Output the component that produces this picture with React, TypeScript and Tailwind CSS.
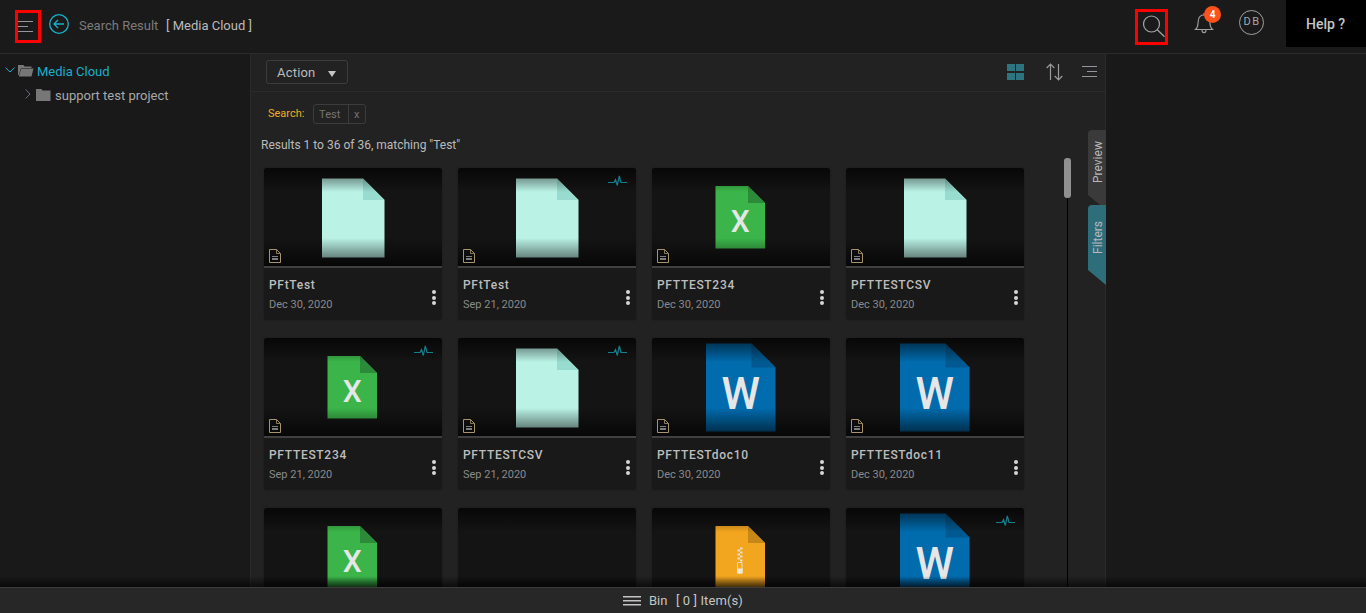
import React from 'react';

type Kind = 'page' | 'excel' | 'word' | 'zip' | 'empty';
type Asset = { kind: Kind; name: string; date: string; pulse?: boolean };

const assets: Asset[] = [
  { kind: 'page', name: 'PFtTest', date: 'Dec 30, 2020' },
  { kind: 'page', name: 'PFtTest', date: 'Sep 21, 2020', pulse: true },
  { kind: 'excel', name: 'PFTTEST234', date: 'Dec 30, 2020' },
  { kind: 'page', name: 'PFTTESTCSV', date: 'Dec 30, 2020' },
  { kind: 'excel', name: 'PFTTEST234', date: 'Sep 21, 2020', pulse: true },
  { kind: 'page', name: 'PFTTESTCSV', date: 'Sep 21, 2020', pulse: true },
  { kind: 'word', name: 'PFTTESTdoc10', date: 'Dec 30, 2020' },
  { kind: 'word', name: 'PFTTESTdoc11', date: 'Dec 30, 2020' },
  { kind: 'excel', name: '', date: '' },
  { kind: 'empty', name: '', date: '' },
  { kind: 'zip', name: '', date: '' },
  { kind: 'word', name: '', date: '', pulse: true },
];

function FileArt({ kind }: { kind: Kind }) {
  return (
    <svg width="178" height="98" viewBox="0 0 178 98" className="block">
      {kind === 'page' && (
        <>
          <path d="M58 10.5H99L120.5 32V89.5H58Z" fill="#baf2e6" />
          <path d="M99 10.5L120.5 32H99Z" fill="#98dccf" />
        </>
      )}
      {kind === 'excel' && (
        <>
          <path d="M63.5 18H96L113 35V80.5H63.5Z" fill="#3bb54a" />
          <path d="M96 18L113 35H96Z" fill="#2c8b38" />
          <text x="88.2" y="64.3" fontSize="32" fontWeight="500" textAnchor="middle" textLength="19" lengthAdjust="spacingAndGlyphs" fill="#e6e6e6">X</text>
        </>
      )}
      {kind === 'word' && (
        <>
          <path d="M54 5.5H99.5L123.5 29.5V93.5H54Z" fill="#006bad" />
          <path d="M99.5 5.5L123.5 29.5H99.5Z" fill="#005a91" />
          <text x="88.7" y="71" fontSize="45" fontWeight="500" textAnchor="middle" textLength="38.5" lengthAdjust="spacingAndGlyphs" fill="#e6e6e6">W</text>
        </>
      )}
      {kind === 'zip' && (
        <>
          <path d="M63.5 18H96L113 35V80.5H63.5Z" fill="#f2a51f" />
          <path d="M96 18L113 35H96Z" fill="#c58718" />
          <path d="M88 39.500h2.500v2h-2.500zM85.500 41.500h2.500v2h-2.500zM88 43.500h2.500v2h-2.500zM85.500 45.500h2.500v2h-2.500zM88 47.500h2.500v2h-2.500zM85.500 49.500h2.500v2h-2.500zM88 51.500h2.500v2h-2.500z" fill="#e8dfc8" />
          <path d="M85.500 54.500h4.500v10.500h-4.500z" fill="none" stroke="#e8dfc8" />
          <path d="M85 60.500h5.500v5h-5.500z" fill="#eee8da" />
        </>
      )}
    </svg>
  );
}

function Card({ asset }: { asset: Asset }) {
  return (
    <div className="w-[178px] h-[152px] rounded-[3px] overflow-hidden bg-[#191919] shadow-[0_0_2px_#1a1a1a]">
      <div className="relative h-[100px] bg-[#141414] border-b-2 border-[#404040]">
        <FileArt kind={asset.kind} />
        <div className="absolute inset-x-0 top-0 h-6 bg-linear-to-b from-black/65 to-transparent" />
        <div className="absolute inset-x-0 bottom-0 h-7 bg-linear-to-t from-black/65 to-transparent" />
        {asset.pulse && (
          <svg className="absolute left-[150px] top-[6px]" width="20" height="14" viewBox="0 0 20 14" fill="none" stroke="#14808f" strokeWidth="1.2">
            <path d="M0 8.500H6L7.500 5.500L9.300 11.500L11.300 1.800L13 8.500H19" />
          </svg>
        )}
        {asset.name && (
          <svg className="absolute left-[5px] top-[81px]" width="13" height="15" viewBox="0 0 13 15" fill="none" stroke="#a8946c">
            <path d="M.5 .5H7.500L11.500 4.500V13.500H.5Z" />
            <path d="M7.500 .5V4.500H11.500" strokeWidth=".8" />
            <path d="M3 7.500H9M3 9.500H9M3 10.500H9" stroke="#8b8b8b" strokeWidth=".9" />
          </svg>
        )}
      </div>
      <div className="flex h-[52px]">
        <div className="flex-1 pl-[5px] pt-[9px]">
          <div className="text-[12px] leading-4 font-medium tracking-[0.7px] text-[#bdbdbd]">{asset.name}</div>
          <div className="mt-1 text-[11px] leading-4 text-[#8a8a8a]">{asset.date}</div>
        </div>
        <div className="flex flex-col gap-[1.5px] pr-[6px] pt-[22px]">
          <span className="size-1 rounded-full bg-[#d6d6d6]" />
          <span className="size-1 rounded-full bg-[#d6d6d6]" />
          <span className="size-1 rounded-full bg-[#d6d6d6]" />
        </div>
      </div>
    </div>
  );
}

function Header() {
  return (
    <header className="flex h-[54px] shrink-0 items-start border-b border-[#2b2b2b] bg-[#1a1a1a]">
      <div className="ml-[15px] mt-[10px] h-[33px] w-[26px] border-3 border-[#f00]">
        <svg width="20" height="27" viewBox="0 0 20 27" stroke="#96969e" className="block">
          <path d="M0 8.500H15M0 13.500H10M0 18.500H15" />
        </svg>
      </div>
      <svg className="ml-2 mt-[14px]" width="20" height="20" viewBox="0 0 20 20" fill="none" stroke="#17b2cd" strokeWidth="1.300">
        <circle cx="10" cy="10" r="9.300" />
        <path d="M15 10H5M9 6L5 10L9 14" />
      </svg>
      <div className="ml-[10px] mt-[17px] flex text-[13px] leading-[18px]">
        <span className="w-[87px] text-[#7b7b7b]">Search Result</span>
        <span className="text-[#bababa]">[ Media Cloud ]</span>
      </div>
      <div className="ml-auto mt-[9px] h-9 w-[33px] border-3 border-[#f00]">
        <svg width="27" height="30" viewBox="0 0 27 30" fill="none" stroke="#a5a5a5" strokeWidth="1.200" className="block">
          <circle cx="13.500" cy="12" r="8" />
          <path d="M19.300 17.700L26.500 24.800" />
        </svg>
      </div>
      <div className="relative ml-[26px] mt-[12px] h-6 w-[20px]">
        <svg width="20" height="22" viewBox="0 0 20 22" fill="none" stroke="#a0a0a0" strokeWidth="1.100">
          <path d="M1.500 17.500C4.500 15 3.800 12 4.300 8.500C4.800 5 6.800 3 10 3S15.200 5 15.700 8.500C16.200 12 15.500 15 18.500 17.500Z" />
          <path d="M8 18C8 21.500 12 21.500 12 18M10 1V3" />
        </svg>
        <span className="absolute left-[10px] top-[-6px] flex size-[17px] items-center justify-center rounded-full bg-[#ff511c] text-[10px] font-bold text-white">4</span>
      </div>
      <div className="ml-[25px] mt-[10px] flex size-[25px] items-center justify-center rounded-full border border-[#a0a0a0] text-[11px] tracking-[1.500px] text-[#a8a8a8]"><span className="-mr-[1px]">DB</span></div>
      <div className="ml-[22px] h-[47px] w-[80px] bg-black pl-5 text-[14px] leading-[48px] font-medium text-[#c6c6c6]">Help ?</div>
    </header>
  );
}

function Sidebar() {
  return (
    <aside className="w-[251px] shrink-0 border-r border-[#292929] bg-[#191919] text-[13px]">
      <div className="mt-[6px] flex h-6 items-center pl-[5px] text-[#1cadc9]">
        <svg width="10" height="6" viewBox="0 0 10 6" fill="none" stroke="#1cadc9" className="-mt-[4px]"><path d="M.5 .7L5 5L9.500 .7" /></svg>
        <svg className="ml-[3px] -mt-[2px]" width="16" height="12" viewBox="0 0 16 12" fill="#777">
          <path d="M0 0H5.500L6.500 1.500H13.500V3H3L.8 10H0Z" />
          <path d="M3.300 3.500H15.500L13.500 11.500H.8Z" />
        </svg>
        <span className="ml-[3px]">Media Cloud</span>
      </div>
      <div className="flex h-6 items-center pl-[25px] text-[#a8a8a8]">
        <svg width="6" height="10" viewBox="0 0 6 10" fill="none" stroke="#66717b" className="-mt-1"><path d="M.7 .5L5 5L.7 9.500" /></svg>
        <svg className="ml-[5px] -mt-[3px]" width="15" height="12" viewBox="0 0 15 12" fill="#777"><path d="M0 0H5.500L6.500 1.500H14.500V12H0Z" /></svg>
        <span className="ml-1">support test project</span>
      </div>
    </aside>
  );
}

function SideTabs() {
  return (
    <div className="absolute left-[837px] top-[76px] w-[18px] text-[12px] text-[#b9b9b9]">
      <svg width="18" height="155" viewBox="0 0 18 155" className="block">
        <path d="M4 0H18V75H12L0 65V4Q0 0 4 0Z" fill="#3a3a3a" />
        <path d="M4 75H18V155L0 140V79Q0 75 4 75Z" fill="#2e6e7b" />
      </svg>
      <span className="absolute left-px top-[-1px] flex h-[66px] w-[18px] rotate-180 items-center justify-center [writing-mode:vertical-rl]">Preview</span>
      <span className="absolute left-px top-[74px] flex h-[66px] w-[18px] rotate-180 items-center justify-center [writing-mode:vertical-rl]">Filters</span>
    </div>
  );
}

export default function App() {
  return (
    <div className="flex h-[613px] w-[1366px] flex-col overflow-hidden bg-[#191919] font-[Roboto,sans-serif]">
      <Header />
      <div className="relative flex h-[533px] shrink-0 overflow-hidden">
        <Sidebar />
        <main className="relative flex w-[855px] flex-col border-r border-[#2b2b2b] bg-[#222]">
          <div className="flex h-[38px] shrink-0 items-center border-b border-[#2b2b2b] pl-[15px] pr-[7px]">
            <button className="-mt-px flex h-6 w-[82px] items-center justify-between rounded-[3px] border border-[#3c3c3c] pl-[10px] pr-[11px] text-[13px] tracking-[0.200px] text-[#bbb]">
              <span className="mt-px">Action</span>
              <svg className="mt-[3px]" width="8" height="6" viewBox="0 0 8 6" fill="#c5c5c5"><path d="M0 0H8L4 6Z" /></svg>
            </button>
            <div className="-mt-[2px] ml-auto flex items-center">
              <svg width="17" height="16" viewBox="0 0 17 16" fill="#2e7480"><path d="M0 0H8V7H0ZM9 0H17V7H9ZM0 9H8V16H0ZM9 9H17V16H9Z" /></svg>
              <svg className="ml-[22px]" width="17" height="18" viewBox="0 0 17 18" fill="none" stroke="#9a9a9a" strokeWidth="1.200"><path d="M4.500 17V1M.7 5L4.500 1L8.300 5M12.500 1V17M8.700 13L12.500 17L16.300 13" /></svg>
              <svg className="ml-[19px] mt-px" width="16" height="12" viewBox="0 0 16 12" stroke="#95959d"><path d="M0 .5H15M5 5.500H15M0 10.500H15" /></svg>
            </div>
          </div>
          <div className="mt-3 flex h-5 items-center pl-[17px] text-[11px]">
            <span className="w-[45px] text-[#f3ac27]">Search:</span>
            <span className="flex h-5 w-[53px] rounded-[3px] border border-[#3c3c3c] leading-[19px] text-[#747474]">
              <span className="w-[35px] border-r border-[#3c3c3c] pl-[5px] tracking-[0.100px]">Test</span>
              <span className="flex-1 pl-[5px]">x</span>
            </span>
          </div>
          <div className="mt-[13px] pl-[10px] text-[12px] leading-4 text-[#bbb]">Results 1 to 36 of 36, matching "Test"</div>
          <div className="mt-[15px] ml-[13px] grid w-[760px] shrink-0 grid-cols-[repeat(4,178px)] gap-x-4 gap-y-[18px]">
            {assets.map((a, i) => <Card key={i} asset={a} />)}
          </div>
          <div className="absolute left-[813px] top-[104px] flex h-[429px] w-[7px] justify-center">
            <div className="h-full w-px bg-black" />
            <div className="absolute top-0 h-10 w-[7px] rounded-[3px] bg-[#909090]" />
          </div>
          <SideTabs />
        </main>
        <div className="pointer-events-none absolute inset-x-0 bottom-0 h-[11px] bg-linear-to-t from-black/65 to-transparent" />
      </div>
      <footer className="flex h-[26px] shrink-0 items-center border-t border-[#3c3c3c] bg-[#272727] pl-[623px] text-[13px] text-[#c5c5c5]">
        <svg width="18" height="10" viewBox="0 0 18 10" stroke="#c4c4c4" strokeWidth="1.500"><path d="M0 .8H18M0 4.800H18M0 8.800H18" /></svg>
        <span className="ml-2 w-[27px]">Bin</span>
        <span className="tracking-[0.1px]">[ 0 ] Item(s)</span>
      </footer>
    </div>
  );
}
